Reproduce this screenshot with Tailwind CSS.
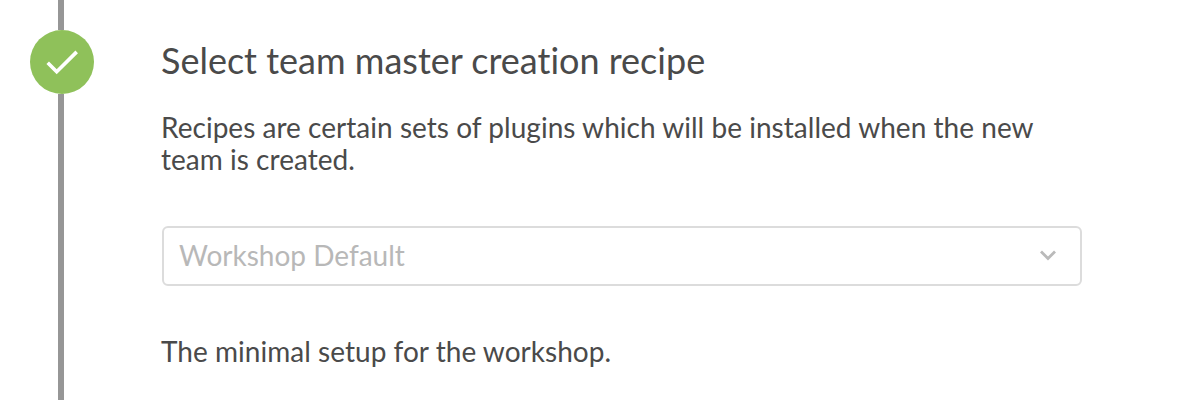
<!DOCTYPE html>
<html lang="en">
<head>
<meta charset="utf-8">
<title>Create team</title>
<script src="https://cdn.jsdelivr.net/npm/@tailwindcss/browser@4"></script>
</head>
<body class="bg-white font-['Lato',sans-serif] text-[#4a4a4a] antialiased [font-variant-ligatures:no-common-ligatures]">
<main class="flex h-[400px] w-[1204px] overflow-hidden">
  <div class="ml-[30px] flex w-16 shrink-0 flex-col items-center">
    <div class="mr-0.5 h-[30px] w-1.5 shrink-0 bg-[#969696]"></div>
    <div class="flex size-16 shrink-0 items-center justify-center rounded-full bg-[#8fc15a]">
      <svg class="size-16" viewBox="0 0 64 64" fill="none" stroke="#fff" stroke-width="3.6"><path d="M17.700 32.700 26.700 41.700 46.700 21.900"/></svg>
    </div>
    <div class="mr-0.5 w-1.5 grow bg-[#969696]"></div>
  </div>
  <section class="ml-[67px] flex w-[921px] flex-col pt-[38px]">
    <h1 class="text-[36px] leading-[44px] whitespace-nowrap">Select team master creation recipe</h1>
    <p class="mt-[29px] text-[28px] leading-8 tracking-[0.03px] whitespace-nowrap">Recipes are certain sets of plugins which will be installed when the new<br>team is created.</p>
    <div class="mt-[51px] ml-px flex h-[60px] w-[920px] items-center justify-between rounded-md border-2 border-[#dcdcdc] pr-[22px] pb-0.5 pl-[15px] text-[28px] text-[#b8b8b8]">
      <span>Workshop Default</span>
      <svg class="size-5" viewBox="0 0 20 20" fill="none" stroke="#bababa" stroke-width="2.800"><path d="M3 6.500 10 13.500 17 6.500"/></svg>
    </div>
    <p class="mt-[49px] text-[28px] leading-8 tracking-[0.03px]">The minimal setup for the workshop.</p>
  </section>
</main>
</body>
</html>
